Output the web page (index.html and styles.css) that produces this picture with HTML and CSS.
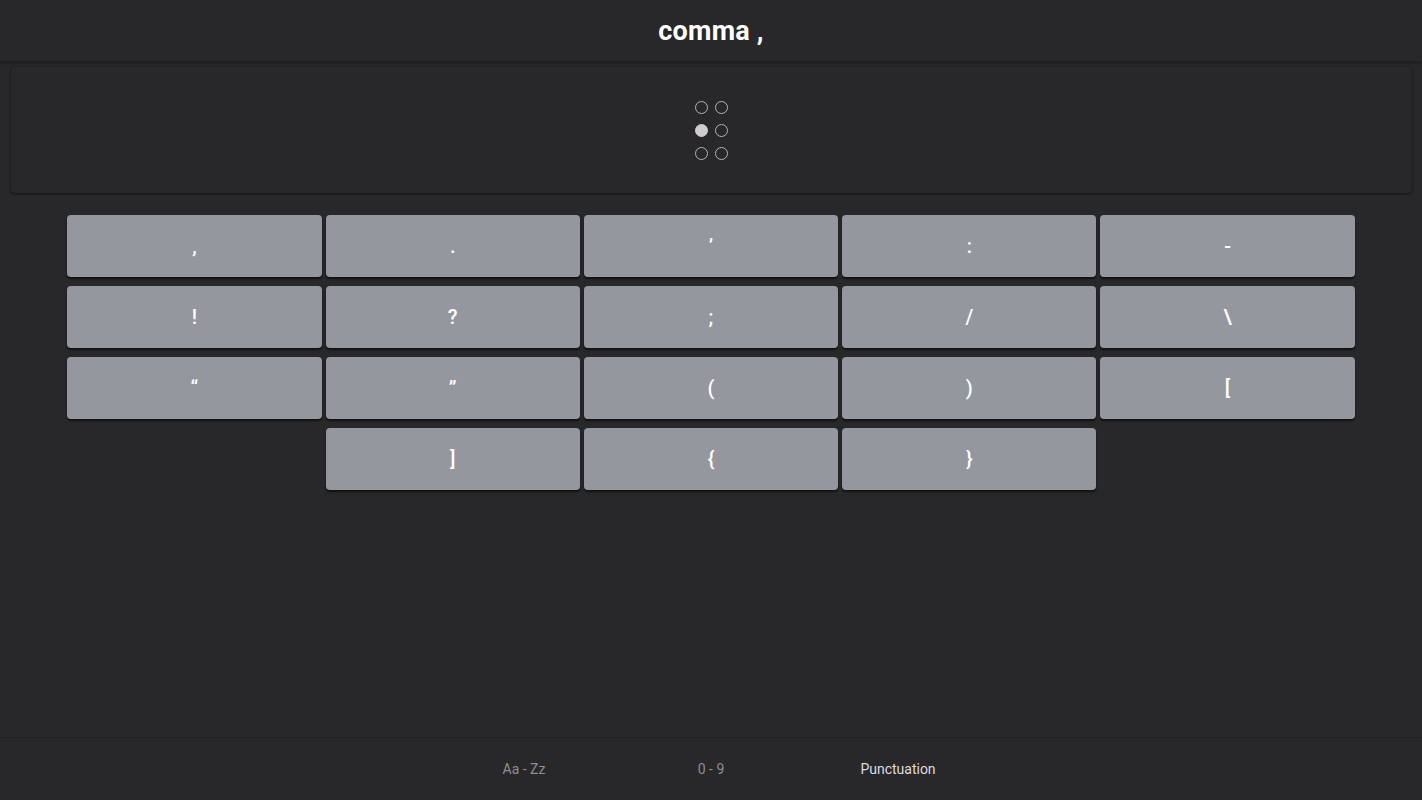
FILE: index.html
```html
<!DOCTYPE html>
<html lang="en">
<head>
<meta charset="utf-8">
<title>Braille - comma</title>
<link rel="stylesheet" href="styles.css">
</head>
<body>
<div class="app">
  <header class="topbar"><h1 class="title">comma ,</h1></header>
  <section class="card">
    <div class="cell">
      <span class="dot"></span><span class="dot"></span>
      <span class="dot on"></span><span class="dot"></span>
      <span class="dot"></span><span class="dot"></span>
    </div>
  </section>
  <main class="keys">
    <button class="key">,</button>
    <button class="key">.</button>
    <button class="key">’</button>
    <button class="key">:</button>
    <button class="key">-</button>
    <button class="key">!</button>
    <button class="key">?</button>
    <button class="key">;</button>
    <button class="key">/</button>
    <button class="key">\</button>
    <button class="key">“</button>
    <button class="key">”</button>
    <button class="key">(</button>
    <button class="key">)</button>
    <button class="key">[</button>
    <button class="key">]</button>
    <button class="key">{</button>
    <button class="key">}</button>
  </main>
  <footer class="tabs">
    <span class="tab">Aa - Zz</span>
    <span class="tab">0 - 9</span>
    <span class="tab active">Punctuation</span>
  </footer>
</div>
</body>
</html>
```
FILE: styles.css
```css
* { box-sizing: border-box; }
html, body {
  margin: 0;
  padding: 0;
  background: #28282a;
  font-family: Roboto, "Liberation Sans", sans-serif;
  color: #fff;
}
.app {
  height: 800px;
  display: flex;
  flex-direction: column;
}
.topbar {
  height: 62px;
  flex: none;
  display: flex;
  align-items: center;
  justify-content: center;
  border-bottom: 1px solid #1f1f21;
  box-shadow: 0 1px 3px rgba(0,0,0,0.35);
}
.title {
  margin: 0;
  font-size: 27px;
  font-weight: 700;
  letter-spacing: 0.2px;
}
.card {
  margin: 5px 10px 0 11px;
  height: 126px;
  flex: none;
  border-radius: 4px;
  background: #28282a;
  box-shadow: 0 1px 3px rgba(0,0,0,0.5), 0 0 1px rgba(0,0,0,0.4);
  display: flex;
  align-items: center;
  justify-content: center;
}
.cell {
  display: grid;
  grid-template-columns: 13px 13px;
  column-gap: 7px;
  row-gap: 10px;
}
.dot {
  width: 13px;
  height: 13px;
  border-radius: 50%;
  border: 1.5px solid #b4b4b8;
}
.dot.on {
  background: #cfcbcf;
  border-color: #cfcbcf;
}
.keys {
  margin: 22px auto 0;
  width: 1288px;
  display: flex;
  flex-wrap: wrap;
  justify-content: center;
  column-gap: 4px;
  row-gap: 9px;
}
.key {
  width: 254.3px;
  height: 62px;
  border: none;
  border-radius: 4px;
  background: #95979e;
  color: #fff;
  font-family: Roboto, "Liberation Sans", sans-serif;
  font-size: 20px;
  font-weight: 500;
  box-shadow: 0 2px 2px rgba(0,0,0,0.6);
  padding: 0;
}
.tabs {
  margin-top: auto;
  height: 63px;
  flex: none;
  border-top: 1px solid #222224;
  display: flex;
  align-items: center;
  justify-content: center;
  gap: 0;
}
.tab {
  width: 187px;
  text-align: center;
  font-size: 14px;
  color: #8d8d92;
}
.tab.active {
  color: #dcdcdf;
}
```
